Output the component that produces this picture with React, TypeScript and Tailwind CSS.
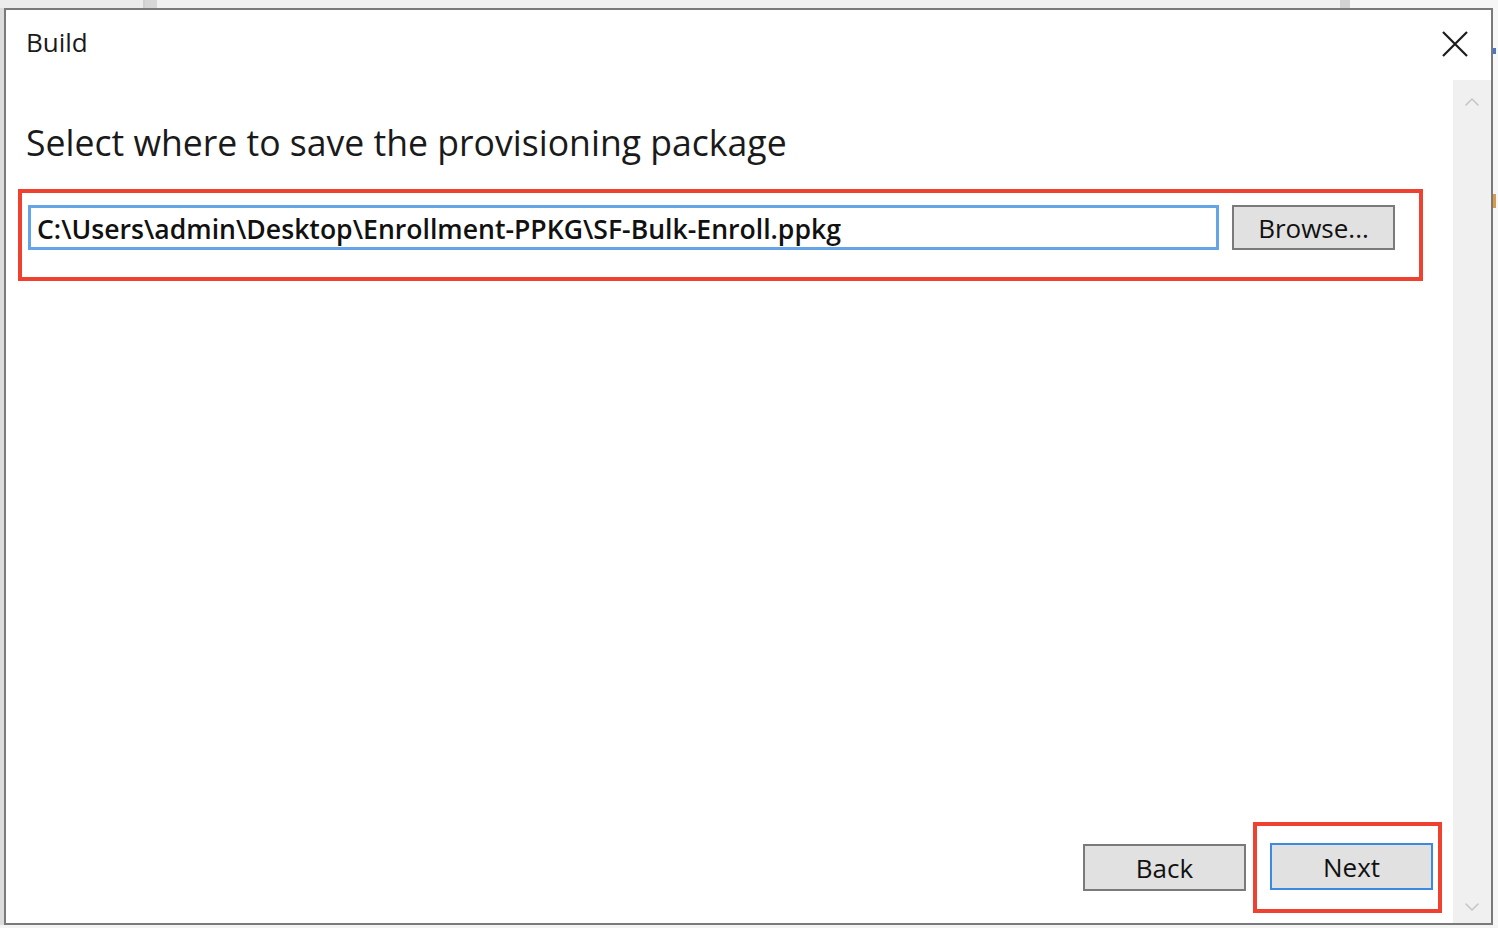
import { ChevronUp, ChevronDown } from "lucide-react";

const font = "font-['Open_Sans','Noto_Sans','Liberation_Sans',sans-serif]";

const WinButton = ({ label, focused = false }: { label: string; focused?: boolean }) => (
  <button
    className={`w-[163px] h-[47px] bg-[#e1e1e1] border-2 ${
      focused ? "border-[#3a8ae3]" : "border-[#7a7a7a]"
    } text-[26px] leading-none text-[#111] flex items-center justify-center`}
  >
    {label}
  </button>
);

export default function App() {
  return (
    <div className={`w-[1498px] h-[928px] overflow-hidden bg-[#f4f4f4] flex flex-col ${font}`}>
      {/* strip of the window behind, above the dialog */}
      <div className="h-[8px] flex shrink-0">
        <div className="w-[145px] bg-[#ececec] border-r-2 border-[#cfcfcf]" />
        <div className="w-[12px] bg-[#d6d6d6]" />
        <div className="flex-1 bg-[#f0f0f0]" />
        <div className="w-[10px] bg-[#d2d2d2]" />
        <div className="w-[148px] bg-[#f6f6f6]" />
      </div>

      <div className="flex h-[917px] shrink-0">
        <div className="w-[4px] bg-[#dcdcdc]" />

        {/* Dialog */}
        <div className="w-[1489px] h-[917px] bg-white border-2 border-[#7a7a7a] flex flex-col">
          {/* Title row */}
          <div className="h-[70px] shrink-0 flex items-start justify-between pl-[20px] pr-[23px] pt-[14px]">
            <span className="text-[26px] leading-[36px] text-[#1a1a1a]">Build</span>
            <svg width="26" height="26" viewBox="0 0 26 26" className="mt-[7px]">
              <path d="M1 1 L25 25 M25 1 L1 25" stroke="#1c1c1c" strokeWidth="2.2" fill="none" />
            </svg>
          </div>

          {/* Body */}
          <div className="flex flex-1 min-h-0">
            <div className="flex-1 flex flex-col">
              <h1 className="pl-[20px] mt-[38px] text-[35.6px] leading-[48px] font-normal text-[#1a1a1a]">
                Select where to save the provisioning package
              </h1>

              <div className="ml-[12px] mt-[23px] w-[1405px] h-[92px] border-4 border-[#ee4130] pl-[6px] pt-[12px] flex items-start">
                <div className="w-[1191px] h-[45px] border-[3px] border-[#64a5e8] pl-[6px] pt-[3px] flex items-center">
                  <span className="text-[26.6px] leading-none font-semibold text-[#111]">
                    C:\Users\admin\Desktop\Enrollment-PPKG\SF-Bulk-Enroll.ppkg
                  </span>
                </div>
                <button className="ml-[13px] w-[163px] h-[45px] bg-[#e1e1e1] border-2 border-[#7a7a7a] text-[26px] leading-none text-[#111] flex items-center justify-center">
                  Browse...
                </button>
              </div>

              <div className="mt-auto mb-[10px] mr-[11px] flex items-center justify-end">
                <WinButton label="Back" />
                <div className="ml-[7px] w-[189px] h-[91px] border-4 border-[#ee4130] pl-[13px] pt-[17px]">
                  <WinButton label="Next" focused />
                </div>
              </div>
            </div>

            {/* Scrollbar */}
            <div className="w-[38px] bg-[#f0f0f0] flex flex-col items-center justify-between pt-[10px] pb-[4px]">
              <ChevronUp className="w-[24px] h-[24px] text-[#c6c6c6]" strokeWidth={1.6} />
              <ChevronDown className="w-[24px] h-[24px] text-[#c6c6c6]" strokeWidth={1.6} />
            </div>
          </div>
        </div>

        <div className="flex-1 bg-[#f7f7f7] flex flex-col">
          <div className="h-[40px]" />
          <div className="h-[6px] w-[3px] bg-[#4a77c4]" />
          <div className="h-[140px]" />
          <div className="h-[14px] w-[3px] bg-[#d99a4a]" />
        </div>
      </div>

      {/* text of the page behind, cut off under the dialog */}
      <div className="h-[3px] overflow-hidden pl-[190px]">
        <div className="-mt-[1px] text-[30px] leading-[36px] text-[#222] whitespace-nowrap">
          Select Enrollment, enter a # or ID and then click Add to
        </div>
      </div>
    </div>
  );
}
